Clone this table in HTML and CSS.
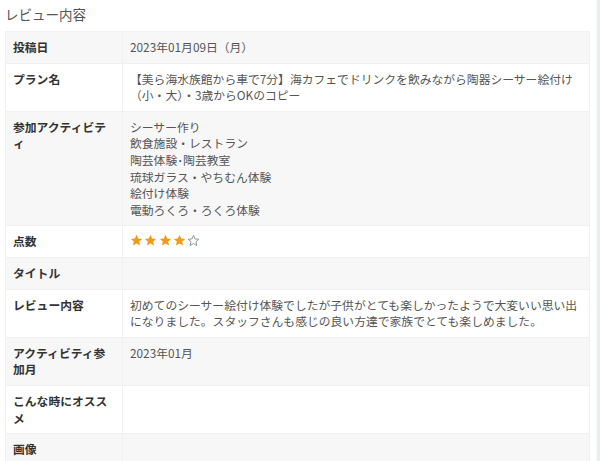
FILE: index.html
```html
<!DOCTYPE html>
<html lang="ja">
<head>
<meta charset="utf-8">
<title>レビュー内容</title>
<link rel="stylesheet" href="styles.css">
</head>
<body>
<div class="page">
  <main class="main">
    <h2 class="heading">レビュー内容</h2>
    <table class="review">
      <tbody>
        <tr class="odd"><th>投稿日</th><td>2023年01月09日（月）</td></tr>
        <tr><th>プラン名</th><td>【美ら海水族館から車で7分】海カフェでドリンクを飲みながら陶器シーサー絵付け（小・大）・3歳からOKのコピー</td></tr>
        <tr class="odd"><th>参加アクティビティ</th><td>シーサー作り<br>飲食施設・レストラン<br>陶芸体験･陶芸教室<br>琉球ガラス・やちむん体験<br>絵付け体験<br>電動ろくろ・ろくろ体験</td></tr>
        <tr><th>点数</th><td>
          <span class="stars">
            <svg class="star full" viewBox="0 0 24 24"><path d="M12 1.5l3.1 7 7.4.6-5.6 4.9 1.7 7.4L12 17.5l-6.6 3.9 1.7-7.4L1.5 9.1l7.4-.6z"/></svg>
            <svg class="star full" viewBox="0 0 24 24"><path d="M12 1.5l3.1 7 7.4.6-5.6 4.9 1.7 7.4L12 17.5l-6.6 3.9 1.7-7.4L1.5 9.1l7.4-.6z"/></svg>
            <svg class="star full" viewBox="0 0 24 24"><path d="M12 1.5l3.1 7 7.4.6-5.6 4.9 1.7 7.4L12 17.5l-6.6 3.9 1.7-7.4L1.5 9.1l7.4-.6z"/></svg>
            <svg class="star full" viewBox="0 0 24 24"><path d="M12 1.5l3.1 7 7.4.6-5.6 4.9 1.7 7.4L12 17.5l-6.6 3.9 1.7-7.4L1.5 9.1l7.4-.6z"/></svg>
            <svg class="star empty" viewBox="0 0 24 24"><path d="M12 2.5l2.9 6.6 7 .6-5.3 4.6 1.6 7L12 17.6l-6.2 3.7 1.6-7-5.3-4.6 7-.6z"/></svg>
          </span>
        </td></tr>
        <tr class="odd"><th>タイトル</th><td></td></tr>
        <tr><th>レビュー内容</th><td>初めてのシーサー絵付け体験でしたが子供がとても楽しかったようで大変いい思い出になりました。スタッフさんも感じの良い方達で家族でとても楽しめました。</td></tr>
        <tr class="odd"><th>アクティビティ参加月</th><td>2023年01月</td></tr>
        <tr><th>こんな時にオススメ</th><td></td></tr>
        <tr class="odd"><th>画像</th><td></td></tr>
      </tbody>
    </table>
  </main>
  <aside class="edge"></aside>
</div>
</body>
</html>
```

FILE: styles.css
```css
html, body {
  margin: 0;
  padding: 0;
  background: #fff;
}

body {
  font-family: "Noto Sans CJK JP", "Noto Sans", sans-serif;
  font-size: 11.8px;
  color: #555;
}

.page {
  display: flex;
  width: 600px;
  height: 461px;
  overflow: hidden;
}

.main {
  flex: 1;
  padding: 0 6px 0 5px;
}

.edge {
  width: 3px;
  background: #e9edf2;
  border-left: 1px solid #f3f5f8;
}

.heading {
  margin: 0 0 3px;
  height: 28px;
  line-height: 28px;
  font-size: 13.5px;
  font-weight: normal;
  color: #555;
}

.review {
  width: 100%;
  border-collapse: collapse;
  table-layout: fixed;
}

.review th,
.review td {
  padding: 7px 8px 7px 7px;
  line-height: 16.6px;
  vertical-align: top;
  text-align: left;
  border: 1px solid #f0f0f0;
}

.review th {
  width: 101px;
  font-weight: bold;
  color: #333;
}

.review td {
  color: #555;
}

.review tr.odd th,
.review tr.odd td {
  background: #f7f7f7;
}

.stars {
  display: inline-flex;
  gap: 1.3px;
  vertical-align: top;
  padding-top: 1px;
}

.star {
  width: 13px;
  height: 13px;
  display: block;
}

.star.full path {
  fill: #f59a16;
}

.star.empty path {
  fill: none;
  stroke: #8a96a3;
  stroke-width: 1.8;
  stroke-linejoin: round;
}
```
